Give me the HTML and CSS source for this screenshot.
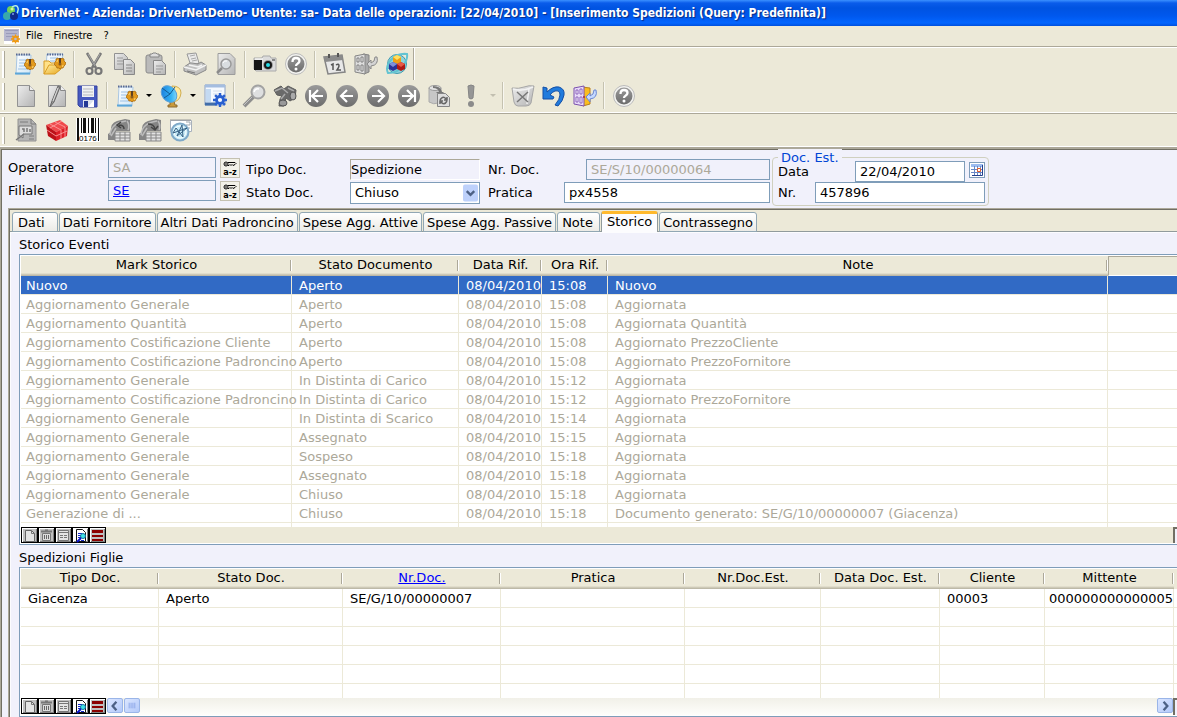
FILE: index.html
```html
<!DOCTYPE html>
<html lang="it">
<head>
<meta charset="utf-8">
<title>DriverNet - Inserimento Spedizioni</title>
<link rel="stylesheet" href="styles.css">
</head>
<body>
<svg class="sprite" aria-hidden="true">
  <defs>
    <linearGradient id="gPaper" x1="0" y1="0" x2="1" y2="1"><stop offset="0" stop-color="#ededed"/><stop offset="1" stop-color="#b4b4b4"/></linearGradient>
    <linearGradient id="gBlue" x1="0" y1="0" x2="1" y2="1"><stop offset="0" stop-color="#ffffff"/><stop offset="1" stop-color="#cfe6f6"/></linearGradient>
    <linearGradient id="gDish" x1="0" y1="0" x2="1" y2="1"><stop offset="0" stop-color="#1570d8"/><stop offset="0.6" stop-color="#36b4f4"/><stop offset="1" stop-color="#a6eaff"/></linearGradient>
    <linearGradient id="gBall" x1="0" y1="0" x2="0" y2="1"><stop offset="0" stop-color="#9a9a9a"/><stop offset="1" stop-color="#6c6c6c"/></linearGradient>
    <linearGradient id="gGold" x1="0" y1="0" x2="1" y2="1"><stop offset="0" stop-color="#fff0a8"/><stop offset="1" stop-color="#e8a820"/></linearGradient>
  </defs>
  <symbol id="i-gear" viewBox="0 0 12 12"><circle cx="6" cy="6" r="3" fill="none" stroke="currentColor" stroke-width="2.4"/><path d="M6 0v3M6 9v3M0 6h3M9 6h3M1.8 1.8l2 2M8.2 8.2l2 2M10.2 1.8l-2 2M3.8 8.2l-2 2" stroke="currentColor" stroke-width="2"/></symbol>
  <symbol id="i-cog" viewBox="0 0 12 12"><path d="M4 1l1 1h2l1-1 2 1v2l1 1 1 1-1 2-1 1-1 2H7l-1 1-1-1H3L2 9 0 7l1-2 1-1V2z" fill="#e39a1c" stroke="#a8690c" stroke-width=".8"/><path d="M5 1h2v5H5z" fill="#5d3f22"/><circle cx="6" cy="7" r="1.500" fill="#8a5a1c"/><path d="M3 5q0-2 1-2M9 8q0 2-1 2" fill="none" stroke="#ffd878"/></symbol>
  <symbol id="i-notes" viewBox="0 0 24 24"><path d="M4 3h14l-1 19H3z" fill="url(#gBlue)" stroke="#a9c6e2"/><path d="M2 21.500h15" stroke="#5ca6d8" stroke-width="2"/><path d="M3 2.500h15" stroke="#5a6a94" stroke-width="2" stroke-dasharray="1.500 1"/><path d="M6 8h9M6 11h6M6 14h6M5 17h9" stroke="#9dc1e4"/><use href="#i-cog" x="11" y="6" width="12" height="12"/></symbol>
  <symbol id="i-folder" viewBox="0 0 24 24"><path d="M4 2h16l-2 14H3z" fill="url(#gBlue)" stroke="#a9c6e2"/><path d="M4 2.500h16" stroke="#5a6a94" stroke-width="2" stroke-dasharray="1.500 1"/><path d="M7 6h8M7 9h5" stroke="#9dc1e4"/><path d="M1 22V9h5l2 2h3" fill="#ffe187" stroke="#d79b24"/><path d="M1 22l5-9h12v4l-6 5z" fill="url(#gGold)" stroke="#d99c22"/><use href="#i-cog" x="11" y="5" width="12" height="12"/></symbol>
  <symbol id="i-cut" viewBox="0 0 24 24"><path d="M5 1l9 15M19 1l-9 15" stroke="#777" stroke-width="2.500"/><path d="M6 2l7 12M18 2l-6 10" stroke="#bbb" stroke-width=".7"/><circle cx="7.500" cy="19" r="3" fill="none" stroke="#777" stroke-width="2.200"/><circle cx="16.500" cy="19" r="3" fill="none" stroke="#777" stroke-width="2.200"/></symbol>
  <symbol id="i-copy" viewBox="0 0 24 24"><path d="M1.500 1.500h9l4 4v12h-13z" fill="url(#gPaper)" stroke="#929292"/><path d="M4 6h6M4 9h6M4 12h6" stroke="#999"/><path d="M10.500 7.500h7l4 4v11h-11z" fill="url(#gPaper)" stroke="#888"/><path d="M13 13h6M13 16h6M13 19h6" stroke="#888"/></symbol>
  <symbol id="i-paste" viewBox="0 0 24 24"><rect x="2" y="3" width="16" height="18" rx="2" fill="#bababa" stroke="#8b8b8b"/><path d="M6 5V2h2l1-1h3l1 1h2v3z" fill="#ddd" stroke="#858585"/><path d="M9.500 8.500h8l4 4v10h-12z" fill="url(#gPaper)" stroke="#888"/><path d="M12 14h7M12 17h7M12 20h5" stroke="#999"/></symbol>
  <symbol id="i-print" viewBox="0 0 24 24"><path d="M4 2l9-1 3 10-8 3z" fill="#e9e9e9" stroke="#999"/><path d="M7 4l5-1M8 7l5-1M9 9l5-1" stroke="#aaa"/><path d="M1 15l6-4h2l6 1 3-2 5 3v5l-10 5-12-4z" fill="#c0c0c0" stroke="#8a8a8a"/><path d="M1 15l12 3 10-5M6 13l9 2 4-2" fill="none" stroke="#f2f2f2" stroke-width="1.500"/><path d="M4 19l8 2" stroke="#777"/></symbol>
  <symbol id="i-preview" viewBox="0 0 24 24"><path d="M4 1.500h12l5 5v16H4z" fill="url(#gPaper)" stroke="#9c9c9c"/><circle cx="12" cy="12" r="5" fill="#d9dde0" stroke="#999" stroke-width="1.500"/><path d="M8 16l-5 5" stroke="#8b8b8b" stroke-width="2.500"/><path d="M9 11q1-3 4-2" fill="none" stroke="#fff"/></symbol>
  <symbol id="i-camera" viewBox="0 0 24 24"><path d="M1 6h8l1-2h7l1 2h5v13H3l-2-2z" fill="#dcdcdc" stroke="#aaa"/><path d="M1 8h8v10H1z" fill="#151515"/><path d="M2 7h8" stroke="#fff"/><circle cx="15" cy="13" r="5" fill="#9d9d9d"/><circle cx="15" cy="13" r="4" fill="#171717"/><circle cx="15" cy="13" r="2" fill="#28dce7"/><path d="M19 8h3" stroke="#888" stroke-width="2"/></symbol>
  <symbol id="i-help" viewBox="0 0 24 24"><circle cx="12" cy="12" r="10.500" fill="#f3f3f0" stroke="#bbb"/><circle cx="12" cy="12" r="8.500" fill="url(#gBall)"/><path d="M8.500 10q0-4 3.500-4t3.500 3q0 1.500-2 2.700-1.500.8-1.500 2.300" fill="none" stroke="#fff" stroke-width="2.300"/><circle cx="12" cy="17" r="1.500" fill="#fff"/></symbol>
  <symbol id="i-calendar" viewBox="0 0 24 24"><path d="M1 5l18-2 3 17-17 2z" fill="#e8e8e8" stroke="#858585" stroke-width="1.500"/><path d="M1 5l18-2 1 5L2 10z" fill="#8b8b8b"/><path d="M6 2v4M15 1v4" stroke="#555" stroke-width="2"/><path d="M8 13l2-1v6M13 13q3-2 3 1 0 1-2 4h4" fill="none" stroke="#555" stroke-width="1.500"/></symbol>
  <symbol id="i-exit" viewBox="0 0 24 24"><path d="M9 2l6 1v17l-5 2z" fill="#aaa" stroke="#838383"/><path d="M1 4l10-2v20L1 20z" fill="#ddd" stroke="#858585"/><path d="M3 6h2v4H3zM7 5h2v5H7zM3 13h2v5H3zM7 13h2v6H7z" fill="#eee" stroke="#777" stroke-width=".9"/><path d="M23 5q2 8-6 9v3l-4-5 4-4v3q4-1 4-6z" fill="#d4d4d4" stroke="#888"/></symbol>
  <symbol id="i-exitc" viewBox="0 0 24 24"><path d="M9 3l8 1v16l-7 2z" fill="#f9bd20" stroke="#b87f1e"/><path d="M1 4l10-2v20L1 20z" fill="#e8daf8" stroke="#7b50ae"/><path d="M3 6h2v4H3zM7 5h2v5H7zM3 13h2v5H3zM7 13h2v6H7z" fill="#fff" stroke="#8156b6" stroke-width=".9"/><circle cx="11" cy="13" r="1" fill="#aa2c42"/><path d="M23 6q2 8-6 9v3l-4-5 4-4v3q4-1 4-6z" fill="#c5d9ff" stroke="#6a86d2"/></symbol>
  <symbol id="i-cubes" viewBox="0 0 24 24"><circle cx="12" cy="12" r="9.500" fill="#8fd3dc" stroke="#3f9bb0"/><path d="M3 21Q0 15 6 8t16-6q1 5-4 12T3 21z" fill="none" stroke="#62c3d2" stroke-width="2"/><path d="M12 3l4 2v5l-4 2-4-2V5z" fill="#f0a012"/><path d="M12 3l4 2-4 3-4-3z" fill="#ffe160"/><path d="M8 10l4 2v5l-4 2-4-2v-5z" fill="#2a3298"/><path d="M8 10l4 2-4 3-4-3z" fill="#7f90d8"/><path d="M16 10l4 2v5l-4 2-4-2v-5z" fill="#b01a16"/><path d="M16 10l4 2-4 3-4-3z" fill="#e65c48"/></symbol>
  <symbol id="i-new" viewBox="0 0 24 24"><path d="M3.500 1.500h12l5 5v16h-17z" fill="url(#gPaper)" stroke="#939393"/><path d="M15.500 1.500v5h5" fill="#eee" stroke="#888"/></symbol>
  <symbol id="i-edit" viewBox="0 0 24 24"><path d="M3.500 1.500h12l5 5v16h-17z" fill="url(#gPaper)" stroke="#939393"/><path d="M15.500 1.500v5h5" fill="#eee" stroke="#888"/><path d="M13 2L7 17l-2 6 4-5 6-15z" fill="#999" stroke="#666"/><path d="M13 4L8 17" stroke="#ddd"/></symbol>
  <symbol id="i-save" viewBox="0 0 24 24"><path d="M2 2h19v21H4l-2-2z" fill="#4659bf" stroke="#3542a0"/><path d="M6 2h12v11H6z" fill="#f0f1f2"/><path d="M7 5h10M7 8h10M7 11h10" stroke="#b7b9bf"/><path d="M7 16h11v7H7z" fill="#dde2ed"/><path d="M8 17h4v6H8z" fill="#233794"/><path d="M12 23l6-7v7z" fill="#fff"/></symbol>
  <symbol id="i-dish" viewBox="0 0 24 24"><path d="M11 17h4l1 4h2v2H9v-2h2z" fill="#c99a3a" stroke="#8c6b30"/><path d="M13 2q9 0 9 7-1 9-9 9z" fill="#ffeaa0" stroke="#d0ad50"/><ellipse cx="10" cy="10" rx="7" ry="9" transform="rotate(-38 10 10)" fill="url(#gDish)" stroke="#5aa0d8"/><path d="M3 4l8 6 5-7M11 10l-6 4" fill="none" stroke="#145a92"/></symbol>
  <symbol id="i-window" viewBox="0 0 24 24"><path d="M2 1h20v20H2z" fill="#f5f9ff" stroke="#8ba2c6"/><path d="M2 2h20" stroke="#a4bde0" stroke-width="3"/><path d="M3 5h5v13H3z" fill="#c4daf2"/><path d="M2 20h12" stroke="#416da9" stroke-width="3"/><path d="M10 7h9M10 10h9" stroke="#d3dce9"/><use href="#i-gear" x="10" y="9" width="14" height="14" color="#285fd0"/></symbol>
  <symbol id="i-find" viewBox="0 0 24 24"><circle cx="16" cy="8" r="6.500" fill="#dedfe0" stroke="#a2a2a2" stroke-width="2"/><path d="M11 13L2 22" stroke="#8e8e8e" stroke-width="4"/><path d="M10 13l-8 8" stroke="#c2c2c2"/><path d="M12 8q1-4 5-3" fill="none" stroke="#fff" stroke-width="1.500"/></symbol>
  <symbol id="i-binoc" viewBox="0 0 24 24"><path d="M1 6l7-4 3 3 4-3 8 4-1 8-5 3-4-3-2 8H6l1-7 2-3-5-1z" fill="#6a6a6a" stroke="#5c5c5c"/><path d="M2 7l7-3 6 5M8 15l4-5M15 4l6 3" fill="none" stroke="#aaa" stroke-width="1.500"/><ellipse cx="10" cy="19" rx="4" ry="3" fill="#999" stroke="#555"/><ellipse cx="20" cy="12" rx="3" ry="4" fill="#aaa" stroke="#555"/></symbol>
  <symbol id="i-first" viewBox="0 0 24 24"><circle cx="12" cy="12" r="11" fill="url(#gBall)"/><path d="M6 6v12M19 12H9M14 6l-6 6 6 6" fill="none" stroke="#fff" stroke-width="2.200"/></symbol>
  <symbol id="i-prev" viewBox="0 0 24 24"><circle cx="12" cy="12" r="11" fill="url(#gBall)"/><path d="M18 12H7M12 6l-6 6 6 6" fill="none" stroke="#fff" stroke-width="2.200"/></symbol>
  <symbol id="i-next" viewBox="0 0 24 24"><circle cx="12" cy="12" r="11" fill="url(#gBall)"/><path d="M6 12h11M12 6l6 6-6 6" fill="none" stroke="#fff" stroke-width="2.200"/></symbol>
  <symbol id="i-last" viewBox="0 0 24 24"><circle cx="12" cy="12" r="11" fill="url(#gBall)"/><path d="M18 6v12M5 12h10M10 6l6 6-6 6" fill="none" stroke="#fff" stroke-width="2.200"/></symbol>
  <symbol id="i-refresh" viewBox="0 0 24 24"><path d="M1 4v14q5 3 9 1h3V4" fill="#c7c7c7" stroke="#aaa"/><ellipse cx="7" cy="4" rx="6" ry="2.500" fill="#e2e2e2" stroke="#999"/><path d="M5 2q8 0 9 6h2l-4 4-4-4h3q-1-4-6-4z" fill="#777"/><path d="M9.500 9.500h8l4 4v9h-12z" fill="#ddd" stroke="#858585"/><path d="M12 16q3-5 6-1M19 17q-3 5-6 1M19 13v3h-3M12 20v-3h3" fill="none" stroke="#666" stroke-width="1.500"/></symbol>
  <symbol id="i-run" viewBox="0 0 24 24"><path d="M9 2q3-2 6 0l-1 12q-2 2-4 0z" fill="#969696" stroke="#858585"/><circle cx="12" cy="20" r="3" fill="#8b8b8b"/></symbol>
  <symbol id="i-trash" viewBox="0 0 24 24"><path d="M1 4q7 1 12-1t10-1l-3 17q-1 3-5 3H7q-3 0-4-4z" fill="url(#gPaper)" stroke="#a6a6a6"/><path d="M2 5q9 3 20-2M18 5l-2 15" fill="none" stroke="#f2f2f2" stroke-width="1.500"/><path d="M6 8l11 10M17 8L6 18" stroke="#777" stroke-width="1.500"/></symbol>
  <symbol id="i-undo" viewBox="0 0 24 24"><path d="M1 3l4 1v4q6-6 12-5 6 2 5 8-1 6-6 11l-3-1q5-6 5-10 0-5-5-4-3 1-5 4l4 2-1 2H1z" fill="#207bdd" stroke="#144fa5"/></symbol>
  <symbol id="i-report" viewBox="0 0 24 24"><path d="M4 1h13l5 5v17H4z" fill="#b5b5b5" stroke="#929292"/><path d="M17 1v5h5M6 4h8M15 18h5M15 21h5" fill="none" stroke="#7d7d7d"/><path d="M5 8h13v8H9v4l-4-3z" fill="#ddd" stroke="#777"/><path d="M8 11h2v3M13 10v4M16 11v3M10 16l-8 6" fill="none" stroke="#777" stroke-width="1.500"/></symbol>
  <symbol id="i-box" viewBox="0 0 24 24"><path d="M1 7l14-5 8 6-12 6z" fill="#f04a4c"/><path d="M1 7l10 7v9l-8-5z" fill="#bc1118"/><path d="M11 14l12-6-1 10-11 5z" fill="#dc2028"/><path d="M5 6l11 6v9M10 4l10 5v10M5 10l12-7M2 12l9 6 11-5" fill="none" stroke="#fc9b9b" stroke-width=".9"/></symbol>
  <symbol id="i-import" viewBox="0 0 24 24"><path d="M1 21v-5l3-2q-1-9 6-11l8-2 5 1v11H9v9H1z" fill="#858585"/><path d="M3 17Q4 5 19 3M20 3q3 4 1 9M4 18l5-8" fill="none" stroke="#bbb" stroke-width="1.500"/><path d="M8 14h15v9H8z" fill="#e2e2e2" stroke="#888"/><path d="M8 17h15M8 20h15M13 14v9M18 14v9" stroke="#888"/></symbol>
  <symbol id="i-compass" viewBox="0 0 24 24"><path d="M1.500 2.500h21v11h-21z" fill="#fff" stroke="#a8b1bc"/><path d="M17 4h4v3h-4M17 10h4" fill="none" stroke="#a1a7ad"/><path d="M1 2h21" stroke="#999"/><circle cx="11" cy="14" r="8.500" fill="#c8ecf8" stroke="#7fa9c8" stroke-width="2"/><circle cx="11" cy="14" r="6" fill="none" stroke="#fff"/><path d="M4 15l14-5-10 8 5-11 1 12-7-9z" fill="none" stroke="#345f83" stroke-width="1"/></symbol>
  <symbol id="m-new" viewBox="0 0 17 17"><path d="M4.500 3.500h6l3 3v8h-9z" fill="#e4e4e4" stroke="#666"/><path d="M10.500 3.500v3h3" fill="none" stroke="#777"/></symbol>
  <symbol id="m-del" viewBox="0 0 17 17"><path d="M4.500 6.500h8v7h-8z" fill="#ddd" stroke="#777"/><path d="M3 4.500h11M7 3.500h3" stroke="#777" stroke-width="2"/><path d="M6.500 8v4M8.500 8v4M10.500 8v4" stroke="#666"/></symbol>
  <symbol id="m-form" viewBox="0 0 17 17"><path d="M3.500 3.500h10v10h-10z" fill="#e5e5e5" stroke="#777"/><path d="M4 5.500h9M5 8.500h3M9 8.500h3M5 10.500h3M9 10.500h3" stroke="#777"/></symbol>
  <symbol id="m-find" viewBox="0 0 17 17"><path d="M4.500 2.500h6l3 3v9h-9z" fill="#fff" stroke="#111"/><path d="M6 6.500h4M6 8.500h3M6 10.500h3M9 13.500h3" stroke="#1428cb"/><circle cx="11" cy="9" r="2.500" fill="#41e4e8" stroke="#1573a0"/><path d="M9 11l-4 4" stroke="#0611c8" stroke-width="2"/></symbol>
  <symbol id="m-list" viewBox="0 0 17 17"><path d="M3 3h11v3H3zM3 8h11v2H3zM3 12h11v2H3z" fill="#8b0000"/></symbol>
  <symbol id="m-key" viewBox="0 0 14 7"><circle cx="3" cy="3" r="2" fill="none" stroke="#000"/><path d="M2 3h2M5 1.500h7l1 1-1 1M5 4.500h1l1-1 1 1 1-1 1 1 2-1" fill="none" stroke="#000"/></symbol>
</svg>

<header class="titlebar">
  <svg class="app-logo" viewBox="0 0 16 16"><circle cx="8" cy="5" r="4" fill="#71cf58"/><path d="M9 2q5-3 6 1t-3 8" fill="none" stroke="#b6ece4" stroke-width="1.500"/><circle cx="4" cy="11" r="4" fill="#37a8ac"/><circle cx="11" cy="11" r="4" fill="#102a8c"/><circle cx="9" cy="4" r="1.500" fill="#d7f3a2"/><circle cx="10" cy="9" r="1" fill="#7aa0ec"/></svg>
  <h1>DriverNet - Azienda: DriverNetDemo- Utente: sa- Data delle operazioni: [22/04/2010] - [Inserimento Spedizioni (Query: Predefinita)]</h1>
</header>
<nav class="menubar">
  <svg class="menu-logo" viewBox="0 0 16 16"><path d="M0 0h16v16H0z" fill="#fff"/><path d="M0 1h15v12H0z" fill="#b7b8cf"/><path d="M1 2.500h13M2 5.500h11M2 8.500h7" stroke="#9a9cba"/><use href="#i-gear" x="7" y="6" width="9" height="10" color="#ef9a13"/></svg>
  <button type="button">File</button><button type="button">Finestre</button><button type="button">?</button>
</nav>
<div class="toolbars">
  <div class="toolbar toolbar-short">
    <button class="tool tool-compact" aria-label="Nuovo elemento"><svg><use href="#i-notes"/></svg></button>
    <button class="tool tool-compact" aria-label="Apri"><svg><use href="#i-folder"/></svg></button>
    <span class="sep"></span>
    <button class="tool" aria-label="Taglia"><svg><use href="#i-cut"/></svg></button>
    <button class="tool" aria-label="Copia"><svg><use href="#i-copy"/></svg></button>
    <button class="tool" aria-label="Incolla"><svg><use href="#i-paste"/></svg></button>
    <span class="sep"></span>
    <button class="tool" aria-label="Stampa"><svg><use href="#i-print"/></svg></button>
    <button class="tool" aria-label="Anteprima"><svg><use href="#i-preview"/></svg></button>
    <span class="sep"></span>
    <button class="tool" aria-label="Fotografia"><svg><use href="#i-camera"/></svg></button>
    <button class="tool" aria-label="Aiuto"><svg><use href="#i-help"/></svg></button>
    <span class="sep"></span>
    <button class="tool" aria-label="Calendario"><svg><use href="#i-calendar"/></svg></button>
    <button class="tool" aria-label="Uscita"><svg><use href="#i-exit"/></svg></button>
    <button class="tool" aria-label="Moduli"><svg><use href="#i-cubes"/></svg></button>
  </div>
  <div class="toolbar toolbar-main">
    <button class="tool" aria-label="Nuovo"><svg><use href="#i-new"/></svg></button>
    <button class="tool" aria-label="Modifica"><svg><use href="#i-edit"/></svg></button>
    <button class="tool" aria-label="Salva"><svg><use href="#i-save"/></svg></button>
    <span class="sep"></span>
    <button class="tool" aria-label="Note"><svg><use href="#i-notes"/></svg></button>
    <button class="drop" aria-label="Altre note"></button>
    <button class="tool" aria-label="Connessione"><svg><use href="#i-dish"/></svg></button>
    <button class="drop" aria-label="Altre connessioni"></button>
    <button class="tool" aria-label="Impostazioni"><svg><use href="#i-window"/></svg></button>
    <span class="sep"></span>
    <button class="tool" aria-label="Cerca"><svg><use href="#i-find"/></svg></button>
    <button class="tool" aria-label="Ricerca avanzata"><svg><use href="#i-binoc"/></svg></button>
    <button class="tool" aria-label="Primo"><svg><use href="#i-first"/></svg></button>
    <button class="tool" aria-label="Precedente"><svg><use href="#i-prev"/></svg></button>
    <button class="tool" aria-label="Successivo"><svg><use href="#i-next"/></svg></button>
    <button class="tool" aria-label="Ultimo"><svg><use href="#i-last"/></svg></button>
    <button class="tool" aria-label="Aggiorna"><svg><use href="#i-refresh"/></svg></button>
    <button class="tool" aria-label="Esegui"><svg><use href="#i-run"/></svg></button>
    <button class="drop drop-off" aria-label="Altre azioni" disabled></button>
    <span class="sep"></span>
    <button class="tool" aria-label="Elimina"><svg><use href="#i-trash"/></svg></button>
    <button class="tool" aria-label="Annulla"><svg><use href="#i-undo"/></svg></button>
    <button class="tool" aria-label="Esci"><svg><use href="#i-exitc"/></svg></button>
    <span class="sep"></span>
    <button class="tool" aria-label="Guida"><svg><use href="#i-help"/></svg></button>
  </div>
  <div class="toolbar">
    <button class="tool" aria-label="Rapporto"><svg><use href="#i-report"/></svg></button>
    <button class="tool" aria-label="Colli"><svg><use href="#i-box"/></svg></button>
    <button class="tool" aria-label="Codice a barre"><svg viewBox="0 0 24 24"><path d="M0 0h24v24H0z" fill="#fff"/><path d="M1 0h2v23H1zM5 0h1v15H5zM7 0h3v15H7zM12 0h1v15h-1zM15 0h3v15h-3zM19 0h1v15h-1zM22 0h1v23h-1z" fill="#111"/><text class="bar-digits" x="3" y="23">0176</text></svg></button>
    <button class="tool" aria-label="Importa"><svg viewBox="0 0 24 24"><use href="#i-import"/><path d="M17 11q0-4-5-4M14 4l-4 3 4 3" fill="none" stroke="#444" stroke-width="1.500"/></svg></button>
    <button class="tool" aria-label="Esporta"><svg viewBox="0 0 24 24"><use href="#i-import"/><path d="M10 6q6 0 7 5M13 9l4 3 3-4" fill="none" stroke="#444" stroke-width="1.500"/></svg></button>
    <button class="tool" aria-label="Percorso"><svg><use href="#i-compass"/></svg></button>
  </div>
</div>

<main class="document">
  <form class="form">
    <div class="group group-user">
      <div class="field"><label for="op">Operatore</label><input id="op" value="SA" disabled><button type="button" class="key" aria-label="Cerca operatore"><svg><use href="#m-key"/></svg><span>a-z</span></button></div>
      <div class="field"><label for="fil">Filiale</label><input id="fil" class="linked" value="SE" readonly><button type="button" class="key" aria-label="Cerca filiale"><svg><use href="#m-key"/></svg><span>a-z</span></button></div>
    </div>
    <div class="group group-type">
      <div class="field"><label for="tipo">Tipo Doc.</label><input id="tipo" class="inset" value="Spedizione" readonly></div>
      <div class="field"><label for="stato">Stato Doc.</label><div class="combo"><select id="stato"><option>Chiuso</option><option>Aperto</option></select><svg viewBox="0 0 16 18"><rect width="16" height="18" rx="2" fill="#bed1fb"/><path d="M4 7l4 4 4-4" fill="none" stroke="#4d6185" stroke-width="2.500"/></svg></div></div>
    </div>
    <div class="group group-number">
      <div class="field"><label for="nrdoc">Nr. Doc.</label><input id="nrdoc" class="w-doc" value="SE/S/10/00000064" disabled></div>
      <div class="field"><label for="pratica">Pratica</label><input id="pratica" class="w-pratica" value="px4558"></div>
    </div>
    <fieldset class="external">
      <legend>Doc. Est.</legend>
      <div class="field"><label for="data">Data</label><input id="data" class="w-date" value="22/04/2010"><button type="button" class="pick" aria-label="Scegli data"><svg viewBox="0 0 14 14"><path d="M1 1h12v12H1z" fill="#fff"/><path d="M1 1h12v3H1z" fill="#9cbcf0"/><path d="M1 6.500h11M1 9.500h11M4.500 3v9M7.500 3v9M10.500 3v9" stroke="#6887c5"/><path d="M12.500 2v10.500H2" fill="none" stroke="#243f8c"/><path d="M7.500 5.500h3v3h-3z" fill="#fff" stroke="#e25b27"/></svg></button></div>
      <div class="field"><label for="nr">Nr.</label><input id="nr" class="w-nr" value="457896"></div>
    </fieldset>
  </form>

  <section class="sheet">
    <div class="tabs" role="tablist">
      <button role="tab" class="tab tab-first">Dati</button><button role="tab" class="tab">Dati Fornitore</button><button role="tab" class="tab">Altri Dati Padroncino</button><button role="tab" class="tab">Spese Agg. Attive</button><button role="tab" class="tab">Spese Agg. Passive</button><button role="tab" class="tab tab-note">Note</button><button role="tab" class="tab active" aria-selected="true">Storico</button><button role="tab" class="tab">Contrassegno</button>
    </div>
    <div class="panel">
      <h2>Storico Eventi</h2>
      <div class="grid">
        <table class="history">
          <colgroup><col class="c271"><col class="c167"><col class="c83"><col class="c66"><col class="c500"><col></colgroup>
          <thead><tr><th>Mark Storico</th><th>Stato Documento</th><th>Data Rif.</th><th>Ora Rif.</th><th>Note</th><th class="blank"></th></tr></thead>
          <tbody>
            <tr class="selected"><td>Nuovo</td><td>Aperto</td><td>08/04/2010</td><td>15:08</td><td>Nuovo</td><td></td></tr>
            <tr><td>Aggiornamento Generale</td><td>Aperto</td><td>08/04/2010</td><td>15:08</td><td>Aggiornata</td><td></td></tr>
            <tr><td>Aggiornamento Quantità</td><td>Aperto</td><td>08/04/2010</td><td>15:08</td><td>Aggiornata Quantità</td><td></td></tr>
            <tr><td>Aggiornamento Costificazione Cliente</td><td>Aperto</td><td>08/04/2010</td><td>15:08</td><td>Aggiornato PrezzoCliente</td><td></td></tr>
            <tr><td>Aggiornamento Costificazione Padroncino</td><td>Aperto</td><td>08/04/2010</td><td>15:08</td><td>Aggiornato PrezzoFornitore</td><td></td></tr>
            <tr><td>Aggiornamento Generale</td><td>In Distinta di Carico</td><td>08/04/2010</td><td>15:12</td><td>Aggiornata</td><td></td></tr>
            <tr><td>Aggiornamento Costificazione Padroncino</td><td>In Distinta di Carico</td><td>08/04/2010</td><td>15:12</td><td>Aggiornato PrezzoFornitore</td><td></td></tr>
            <tr><td>Aggiornamento Generale</td><td>In Distinta di Scarico</td><td>08/04/2010</td><td>15:14</td><td>Aggiornata</td><td></td></tr>
            <tr><td>Aggiornamento Generale</td><td>Assegnato</td><td>08/04/2010</td><td>15:15</td><td>Aggiornata</td><td></td></tr>
            <tr><td>Aggiornamento Generale</td><td>Sospeso</td><td>08/04/2010</td><td>15:18</td><td>Aggiornata</td><td></td></tr>
            <tr><td>Aggiornamento Generale</td><td>Assegnato</td><td>08/04/2010</td><td>15:18</td><td>Aggiornata</td><td></td></tr>
            <tr><td>Aggiornamento Generale</td><td>Chiuso</td><td>08/04/2010</td><td>15:18</td><td>Aggiornata</td><td></td></tr>
            <tr><td>Generazione di ...</td><td>Chiuso</td><td>08/04/2010</td><td>15:18</td><td>Documento generato: SE/G/10/00000007 (Giacenza)</td><td></td></tr>
            <tr class="cut-short"><td></td><td></td><td></td><td></td><td></td><td></td></tr>
          </tbody>
        </table>
        <div class="strip">
          <button class="mini" aria-label="Nuova riga"><svg><use href="#m-new"/></svg></button><button class="mini" aria-label="Elimina riga"><svg><use href="#m-del"/></svg></button><button class="mini" aria-label="Scheda"><svg><use href="#m-form"/></svg></button><button class="mini mini-on" aria-label="Cerca riga"><svg><use href="#m-find"/></svg></button><button class="mini" aria-label="Elenco"><svg><use href="#m-list"/></svg></button>
          <span class="track"></span><span class="corner"></span>
        </div>
      </div>
      <h2>Spedizioni Figlie</h2>
      <div class="grid">
        <table class="children">
          <colgroup><col class="c138"><col class="c184"><col class="c158"><col class="c184"><col class="c136"><col class="c119"><col class="c105"><col class="c129"><col></colgroup>
          <thead><tr><th>Tipo Doc.</th><th>Stato Doc.</th><th><a href="#nrdoc">Nr.Doc.</a></th><th>Pratica</th><th>Nr.Doc.Est.</th><th>Data Doc. Est.</th><th>Cliente</th><th>Mittente</th><th></th></tr></thead>
          <tbody>
            <tr><td>Giacenza</td><td>Aperto</td><td>SE/G/10/00000007</td><td></td><td></td><td></td><td>00003</td><td class="code">000000000000005</td><td></td></tr>
            <tr><td></td><td></td><td></td><td></td><td></td><td></td><td></td><td></td><td></td></tr>
            <tr><td></td><td></td><td></td><td></td><td></td><td></td><td></td><td></td><td></td></tr>
            <tr><td></td><td></td><td></td><td></td><td></td><td></td><td></td><td></td><td></td></tr>
            <tr><td></td><td></td><td></td><td></td><td></td><td></td><td></td><td></td><td></td></tr>
            <tr class="cut-tall"><td></td><td></td><td></td><td></td><td></td><td></td><td></td><td></td><td></td></tr>
          </tbody>
        </table>
        <div class="strip strip-scroll">
          <button class="mini" aria-label="Nuova riga"><svg><use href="#m-new"/></svg></button><button class="mini" aria-label="Elimina riga"><svg><use href="#m-del"/></svg></button><button class="mini" aria-label="Scheda"><svg><use href="#m-form"/></svg></button><button class="mini mini-on" aria-label="Cerca riga"><svg><use href="#m-find"/></svg></button><button class="mini" aria-label="Elenco"><svg><use href="#m-list"/></svg></button>
          <button class="scroll" aria-label="Scorri a sinistra"><svg viewBox="0 0 15 15"><path d="M9 3L5 7.500 9 12" fill="none" stroke="#4d6185" stroke-width="2.500"/></svg></button><button class="scroll" aria-label="Cursore"><svg viewBox="0 0 15 15"><path d="M4.500 4v6M6.500 4v6M8.500 4v6M10.500 4v6" stroke="#8ca7e8"/></svg></button>
          <span class="track"></span>
          <button class="scroll" aria-label="Scorri a destra"><svg viewBox="0 0 15 15"><path d="M6 3l4 4.500L6 12" fill="none" stroke="#4d6185" stroke-width="2.500"/></svg></button><span class="corner"></span>
        </div>
      </div>
    </div>
  </section>
</main>
</body>
</html>
```
FILE: styles.css
```css
* { box-sizing: border-box; }
body {
  margin: 0;
  min-height: 100vh;
  overflow-x: hidden;
  display: flex;
  flex-direction: column;
  background: #f1f1fb;
  color: #000;
  font: 13px/17px "DejaVu Sans", Verdana, sans-serif;
}
button, input, select { font: inherit; color: inherit; border-radius: 0; margin: 0; }
button { padding: 0; border: 0; background: none; }
.sprite { position: absolute; width: 0; height: 0; }

.titlebar {
  display: flex;
  align-items: center;
  gap: 2px;
  height: 26px;
  padding-left: 3px;
  background: linear-gradient(#3b90ff 0, #0a5cea 3px, #0053e1 8px, #0058ee 16px, #0366ff 23px, #0050dc 26px);
}
.titlebar h1 {
  margin: 0;
  color: #fff;
  font: bold 12px/20px "DejaVu Sans Condensed", Tahoma, sans-serif;
  white-space: nowrap;
  text-shadow: 1px 1px 1px #0a2a82;
}
.app-logo, .menu-logo { width: 16px; height: 16px; }
.menubar {
  display: flex;
  align-items: center;
  height: 20px;
  padding-left: 4px;
  background: #ece9d8;
  font: 11px/16px "DejaVu Sans Condensed", Tahoma, sans-serif;
}
.menubar button { padding: 0 5px 0 6px; }

.toolbars { background: #ece9d8; border-top: 1px solid #aca899; border-bottom: 1px solid #fff; box-shadow: inset 0 1px #fff; padding-top: 1px; }
.toolbar {
  display: flex;
  align-items: center;
  height: 32px;
  padding-left: 10px;
  background: linear-gradient(#fff, #fff) 2px 3px / 2px 27px no-repeat, linear-gradient(#aca899, #aca899) 4px 3px / 1px 27px no-repeat;
}
.toolbar-short { width: fit-content; border-right: 1px solid #aca899; padding-right: 1px; box-shadow: 1px 0 #fff; }
.toolbar-main { height: 34px; padding-bottom: 2px; border-bottom: 1px solid #aca899; box-shadow: inset 0 -1px #fff; }
.tool { display: grid; place-items: center; width: 31px; height: 30px; }
.tool-compact { width: 30px; }
.tool svg { width: 24px; height: 24px; }
.bar-digits { font: 8px "Liberation Sans", Arial, sans-serif; }
.sep { width: 8px; height: 27px; background: linear-gradient(90deg, #c5c2b0 1px, #f8f7f1 1px, #f8f7f1 2px, transparent 2px) 3px 0 no-repeat; }
.drop { width: 13px; height: 24px; display: grid; place-items: center; }
.drop::after { content: ""; border: 3px solid transparent; border-top-color: #000; border-bottom: 0; }
.drop-off::after { border-top-color: #c2bfb0; }

.document { flex: 1; display: flex; flex-direction: column; border-top: 2px solid #aca899; border-left: 1px solid #aca899; box-shadow: inset 1px 1px #716f64; padding: 1px 0 0 1px; }
.form { display: flex; align-items: flex-start; height: 58px; padding-left: 6px; }
.group { display: flex; flex-direction: column; gap: 2px; padding-top: 9px; }
.group-user { padding-top: 7px; width: 238px; }
.group-type { width: 242px; }
.group-number { width: 282px; }
.field { display: flex; align-items: center; height: 21px; }
.field input {
  width: 108px;
  height: 21px;
  padding: 0 4px;
  border: 1px solid #7f9db9;
  background: #fff;
}
.field input:disabled { background: #f1f1fb; color: #aca899; }
.group-user label { width: 100px; }
.group-user input.linked { background: #f1f1fb; color: #0000ff; text-decoration: underline; }
.group-type label { width: 104px; }
.group-type input.inset { width: 130px; padding: 0; background: #f1f1fb; border-color: #aca899 #fff #fff #aca899; }
.group-number label { flex: 1; }
.field .w-doc { width: 184px; }
.field .w-pratica { width: 206px; }
.key { width: 20px; height: 20px; margin-left: 4px; padding-top: 2px; border: 1px solid #c4c1b2; background: #f2f1e8; display: flex; flex-direction: column; align-items: center; }
.key svg { width: 14px; height: 7px; flex: none; }
.key span { font: bold 9px/9px "DejaVu Sans Condensed", sans-serif; }
.combo { display: grid; width: 130px; height: 22px; }
.combo select, .combo svg { grid-area: 1 / 1; }
.combo select { appearance: none; width: 130px; height: 22px; padding: 0 4px; border: 1px solid #7f9db9; background: #fff; }
.combo svg { width: 15px; height: 18px; place-self: center end; margin-right: 2px; pointer-events: none; }
.external { position: relative; width: 217px; height: 49px; margin: 7px 0 0 2px; padding: 3px 3px 0 5px; border: 1px solid #d0d0bf; border-radius: 4px; }
.external legend { position: absolute; left: 5px; top: -9px; padding: 0 3px; background: #f1f1fb; color: #0046d5; }
.external label { flex: 1; }
.field .w-date { width: 110px; }
.field .w-nr { width: 170px; }
.pick { width: 16px; height: 16px; margin: 0 0 4px 4px; border: 1px solid #7f9db9; background: #fff; display: grid; }
.pick svg { width: 14px; height: 14px; }

.sheet { flex: 1; display: flex; flex-direction: column; margin-left: 6px; border-top: 1px solid #aca899; border-left: 1px solid #aca899; box-shadow: inset 1px 1px #716f64; padding: 2px 0 0 1px; background: #ece9d8; }
.tabs { display: flex; align-items: flex-end; gap: 1px; height: 21px; padding-left: 2px; box-shadow: inset 0 -1px #919b9c; }
.tab {
  height: 20px;
  padding: 0 3px;
  border: 1px solid #91a7b4;
  border-radius: 3px 3px 0 0;
  background: linear-gradient(#fff, #ecebe6);
  white-space: nowrap;
}
.tab-first { padding: 0 12px 0 5px; }
.tab-note { padding: 0 6px 0 4px; }
.tab.active { height: 21px; padding: 0 5px 3px; border-color: #919b9c; border-top: 3px solid #ffb92d; border-bottom: 0; background: #fcfcfe; line-height: 15px; }
.panel { flex: 1; background: #f1f1fb; box-shadow: inset 1px 1px #fcfcfe; padding-left: 9px; }
.panel h2 { margin: 0; height: 22px; font: 13px/26px "DejaVu Sans", Verdana, sans-serif; }

.grid { border: 1px solid #7f9db9; border-right: 0; padding: 1px 0 1px 1px; background: #fff; overflow: hidden; }
.grid table { width: 100%; table-layout: fixed; border-collapse: separate; border-spacing: 0; }
.grid th {
  height: 20px;
  padding: 0;
  font-weight: normal;
  line-height: 18px;
  vertical-align: top;
  background: linear-gradient(90deg, #aca899 1px, #fff 1px) right 4px / 2px 11px no-repeat, linear-gradient(#ece9d8 17px, #d5d1bf 18px, #b5b1a0 20px);
}
.grid th.blank { border-top: 1px solid #aca899; border-left: 1px solid #aca899; border-bottom: 1px solid #fff; }
.grid th:last-child { background: #ece9d8; }
.grid th a { color: #0000ff; }
.grid td {
  height: 19px;
  padding: 1px 0 0 7px;
  border-right: 1px solid #ece9d8;
  border-bottom: 1px solid #ece9d8;
  line-height: 17px;
  white-space: nowrap;
}
.grid td:last-child { border-right: 0; padding: 0; }
.history td { color: #aca899; }
.history td:first-child { padding-left: 5px; }
.history .selected td { background: #316ac5; color: #fff; }
.children .code { padding-left: 4px; }
.grid .cut-short td { height: 4px; padding: 0; border-bottom: 0; }
.grid .cut-tall td { height: 14px; padding: 0; border-bottom: 0; }
.c271 { width: 271px; } .c167 { width: 167px; } .c83 { width: 83px; } .c66 { width: 66px; } .c500 { width: 500px; }
.c138 { width: 138px; } .c184 { width: 184px; } .c158 { width: 158px; } .c136 { width: 136px; } .c119 { width: 119px; } .c105 { width: 105px; } .c129 { width: 129px; }

.strip { display: flex; height: 16px; background: #ece9d8; }
.strip-scroll { height: 17px; background: linear-gradient(#f1f0e8, #fefefb); }
.mini { width: 17px; height: 16px; border: 1px solid #000; background: #c0c0c0; box-shadow: inset 1px 1px #fff, inset -1px -1px #808080; display: grid; place-items: center; place-content: center; }
.mini-on { background: #fff; }
.mini svg { width: 17px; height: 17px; }
.track { flex: 1; }
.corner { width: 4px; border: 2px solid #716f64; border-right: 0; border-bottom: 0; background: #f1f1fb; }
.scroll { width: 16px; height: 15px; margin-left: 1px; border: 1px solid #9ab5e8; border-radius: 2px; background: linear-gradient(135deg, #dbe6ff, #b3c9fa); display: grid; place-items: center; }
.scroll svg { width: 14px; height: 14px; }
```
